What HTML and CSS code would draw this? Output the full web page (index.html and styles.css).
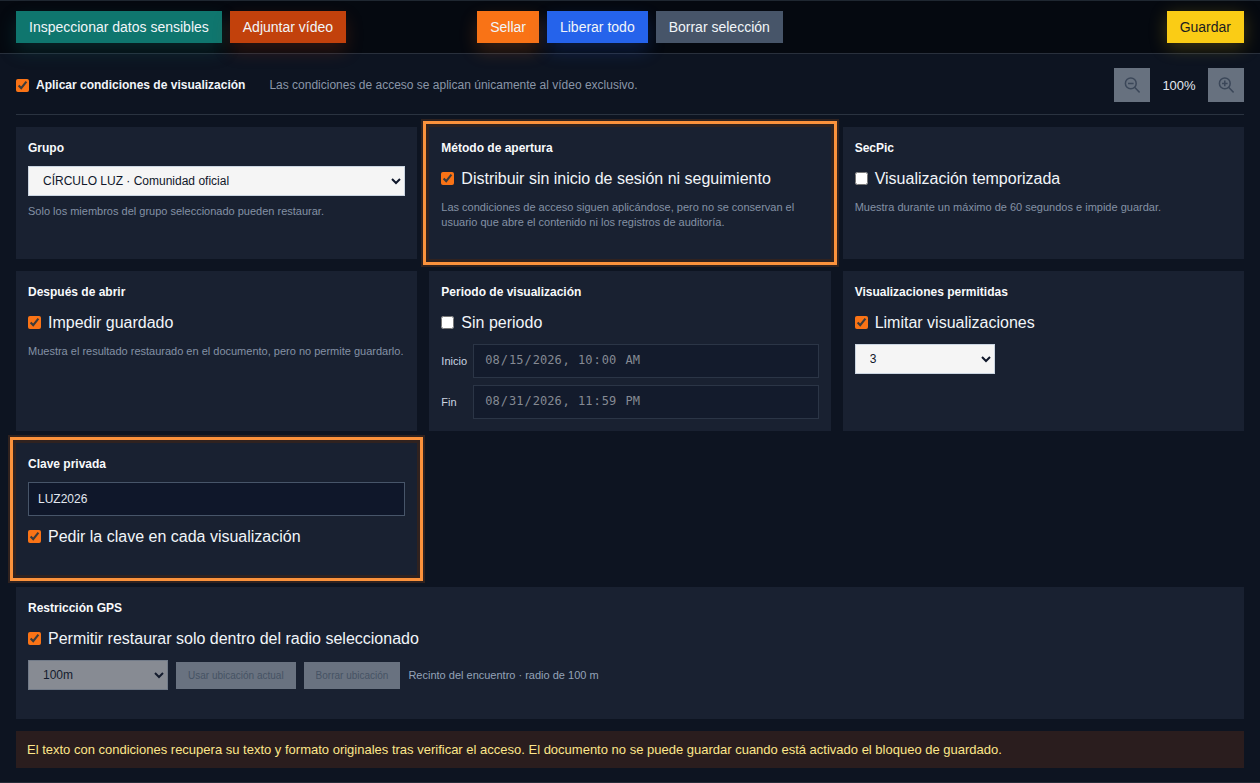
FILE: index.html
```html
<!DOCTYPE html>
<html lang="es">
<head>
<meta charset="utf-8">
<meta name="viewport" content="width=device-width, initial-scale=1">
<title>Condiciones de visualización</title>
<link rel="stylesheet" href="styles.css">
</head>
<body>
<header class="toolbar">
  <div class="group">
    <button class="btn teal" type="button">Inspeccionar datos sensibles</button>
    <button class="btn rust" type="button">Adjuntar vídeo</button>
  </div>
  <div class="group">
    <button class="btn orange" type="button">Sellar</button>
    <button class="btn blue" type="button">Liberar todo</button>
    <button class="btn slate" type="button">Borrar selección</button>
  </div>
  <div class="group end">
    <button class="btn yellow" type="button">Guardar</button>
  </div>
</header>
<main class="panel">
  <div class="conditions">
    <label class="apply"><input type="checkbox" checked>Aplicar condiciones de visualización</label>
    <span class="note">Las condiciones de acceso se aplican únicamente al vídeo exclusivo.</span>
    <div class="zoom">
      <button class="zoom-btn" type="button" aria-label="Alejar" disabled>
        <svg viewBox="0 0 16 16" width="16" height="16" fill="none" stroke="currentColor" stroke-width="1.5"><circle cx="6.8" cy="6.4" r="5.4"/><path d="M10.6 10.3l5 5.2M4 6.4h5.6"/></svg>
      </button>
      <span class="zoom-value">100%</span>
      <button class="zoom-btn" type="button" aria-label="Acercar" disabled>
        <svg viewBox="0 0 16 16" width="16" height="16" fill="none" stroke="currentColor" stroke-width="1.5"><circle cx="6.8" cy="6.4" r="5.4"/><path d="M10.6 10.3l5 5.2M4 6.4h5.6M6.8 3.6v5.6"/></svg>
      </button>
    </div>
  </div>
  <div class="cards">
    <section class="card">
      <h2><label for="grupo">Grupo</label></h2>
      <select id="grupo" class="select wide"><option>CÍRCULO LUZ · Comunidad oficial</option></select>
      <p class="hint">Solo los miembros del grupo seleccionado pueden restaurar.</p>
    </section>
    <section class="card highlight">
      <h2>Método de apertura</h2>
      <label class="check"><input type="checkbox" checked>Distribuir sin inicio de sesión ni seguimiento</label>
      <p class="hint">Las condiciones de acceso siguen aplicándose, pero no se conservan el usuario que abre el contenido ni los registros de auditoría.</p>
    </section>
    <section class="card">
      <h2>SecPic</h2>
      <label class="check"><input type="checkbox">Visualización temporizada</label>
      <p class="hint">Muestra durante un máximo de 60 segundos e impide guardar.</p>
    </section>
    <section class="card">
      <h2>Después de abrir</h2>
      <label class="check"><input type="checkbox" checked>Impedir guardado</label>
      <p class="hint">Muestra el resultado restaurado en el documento, pero no permite guardarlo.</p>
    </section>
    <section class="card">
      <h2>Periodo de visualización</h2>
      <label class="check"><input type="checkbox">Sin periodo</label>
      <div class="period">
        <label for="inicio">Inicio</label>
        <input id="inicio" class="field date" type="datetime-local" value="2026-08-15T10:00" disabled>
        <label for="fin">Fin</label>
        <input id="fin" class="field date" type="datetime-local" value="2026-08-31T23:59" disabled>
      </div>
    </section>
    <section class="card">
      <h2>Visualizaciones permitidas</h2>
      <label class="check"><input type="checkbox" checked>Limitar visualizaciones</label>
      <select class="select" aria-label="Visualizaciones permitidas"><option>3</option></select>
    </section>
    <section class="card highlight">
      <h2><label for="clave">Clave privada</label></h2>
      <input id="clave" class="field" type="text" value="LUZ2026">
      <label class="check"><input type="checkbox" checked>Pedir la clave en cada visualización</label>
    </section>
    <section class="card full">
      <h2>Restricción GPS</h2>
      <label class="check"><input type="checkbox" checked>Permitir restaurar solo dentro del radio seleccionado</label>
      <div class="gps">
        <select class="select" aria-label="Radio" disabled><option>100m</option></select>
        <button class="mini" type="button" disabled>Usar ubicación actual</button>
        <button class="mini" type="button" disabled>Borrar ubicación</button>
        <span class="place">Recinto del encuentro · radio de 100 m</span>
      </div>
    </section>
  </div>
  <p class="notice">El texto con condiciones recupera su texto y formato originales tras verificar el acceso. El documento no se puede guardar cuando está activado el bloqueo de guardado.</p>
</main>
</body>
</html>
```
FILE: styles.css
```css
* { box-sizing: border-box; }
body {
  margin: 0;
  background: #0d1421;
  color: #f1f5f9;
  font-family: "Liberation Sans", Arial, sans-serif;
}
button, input, select { font-family: inherit; }
input[type="checkbox"] {
  width: 13px;
  height: 13px;
  margin: 0;
  flex: none;
  accent-color: #f97316;
}
.toolbar {
  display: grid;
  grid-template-columns: 1fr auto 1fr;
  padding: 10px 16px;
  background: #050910;
  border-top: 1px solid #1f2731;
  border-bottom: 1px solid #29303c;
}
.group { display: flex; gap: 8px; }
.end { justify-content: flex-end; }
.btn {
  height: 32px;
  padding: 0 13px;
  border: 0;
  font-size: 14px;
  color: #f1f5f9;
  white-space: nowrap;
}
.teal { background: #0f766e; box-shadow: 0 8px 18px rgba(15, 118, 110, .25); }
.rust { background: #c2410c; box-shadow: 0 8px 18px rgba(194, 65, 12, .22); }
.orange { background: #f97316; box-shadow: 0 8px 18px rgba(249, 115, 22, .22); }
.blue { background: #2563eb; box-shadow: 0 8px 18px rgba(37, 99, 235, .22); }
.slate { background: #475569; }
.yellow { background: #facc15; color: #1c1d20; box-shadow: 0 4px 18px rgba(250, 204, 21, .25); }
.panel { padding: 14px 16px; border-bottom: 1px solid #242c38; }
.conditions {
  display: flex;
  align-items: center;
  gap: 24px;
  padding-bottom: 12px;
  border-bottom: 1px solid #2a3340;
}
.apply {
  display: flex;
  align-items: center;
  gap: 7px;
  font-size: 12px;
  font-weight: 700;
}
.note { font-size: 12px; color: #8a96a8; }
.zoom { display: flex; align-items: center; gap: 12px; margin-left: auto; }
.zoom-btn {
  display: grid;
  place-items: center;
  width: 36px;
  height: 34px;
  padding: 0;
  border: 0;
  background: #67717f;
  color: #3b4759;
}
.zoom-value { min-width: 34px; font-size: 13px; text-align: center; color: #e2e8f0; }
.cards {
  display: grid;
  grid-template-columns: repeat(3, 1fr);
  gap: 12px;
  margin: 12px 0;
}
.card {
  min-height: 132px;
  padding: 12px;
  background: #192131;
}
.full { grid-column: 1 / -1; }
.highlight {
  outline: 3px solid #fb923c;
  outline-offset: 3px;
  box-shadow: 0 0 0 8px rgba(249, 115, 22, .15);
}
h2 { margin: 2px 0 10px; font-size: 12px; line-height: 15px; color: #f8fafc; }
.check {
  display: flex;
  align-items: center;
  gap: 7px;
  padding-top: 1px;
  font-size: 16px;
  line-height: 24px;
}
.check input { margin-bottom: 2px; }
.hint { margin: 9px 0 0; font-size: 11px; line-height: 15px; color: #8491a5; }
.select {
  display: block;
  width: 140px;
  height: 30px;
  padding: 0 10px;
  border: 1px solid #cbd5e1;
  border-radius: 0;
  background: #f5f5f5;
  color: #0f172a;
  font-size: 12px;
}
.select:disabled { opacity: .5; }
.check + .select { margin-top: 9px; }
.wide { width: 100%; }
.wide + .hint { margin-top: 8px; }
.field {
  display: block;
  width: 100%;
  height: 34px;
  margin: 0;
  padding: 0 9px;
  border: 1px solid #475569;
  border-radius: 0;
  background: #0f172a;
  color: #e2e8f0;
  font-size: 12px;
}
.field + .check { margin-top: 8px; }
.period {
  display: grid;
  grid-template-columns: 26px 1fr;
  align-items: center;
  gap: 7px 6px;
  margin-top: 9px;
  font-size: 11px;
  color: #cbd5e1;
}
.date {
  padding: 0 10px 3px;
  border-color: #2b3546;
  background: #131b2c;
  color: #858a93;
  font-family: "DejaVu Sans Mono", monospace;
}
.date::-webkit-calendar-picker-indicator { opacity: 0; }
.gps { display: flex; align-items: center; gap: 8px; margin-top: 9px; }
.mini {
  height: 27px;
  padding: 0 12px;
  border: 0;
  background: #697280;
  color: #465264;
  font-size: 10px;
}
.place { font-size: 11px; color: #94a3b8; }
.notice {
  margin: 0;
  padding: 9px 11px;
  background: #2a1d1e;
  color: #fde68a;
  font-size: 13px;
  line-height: 19px;
}
```
